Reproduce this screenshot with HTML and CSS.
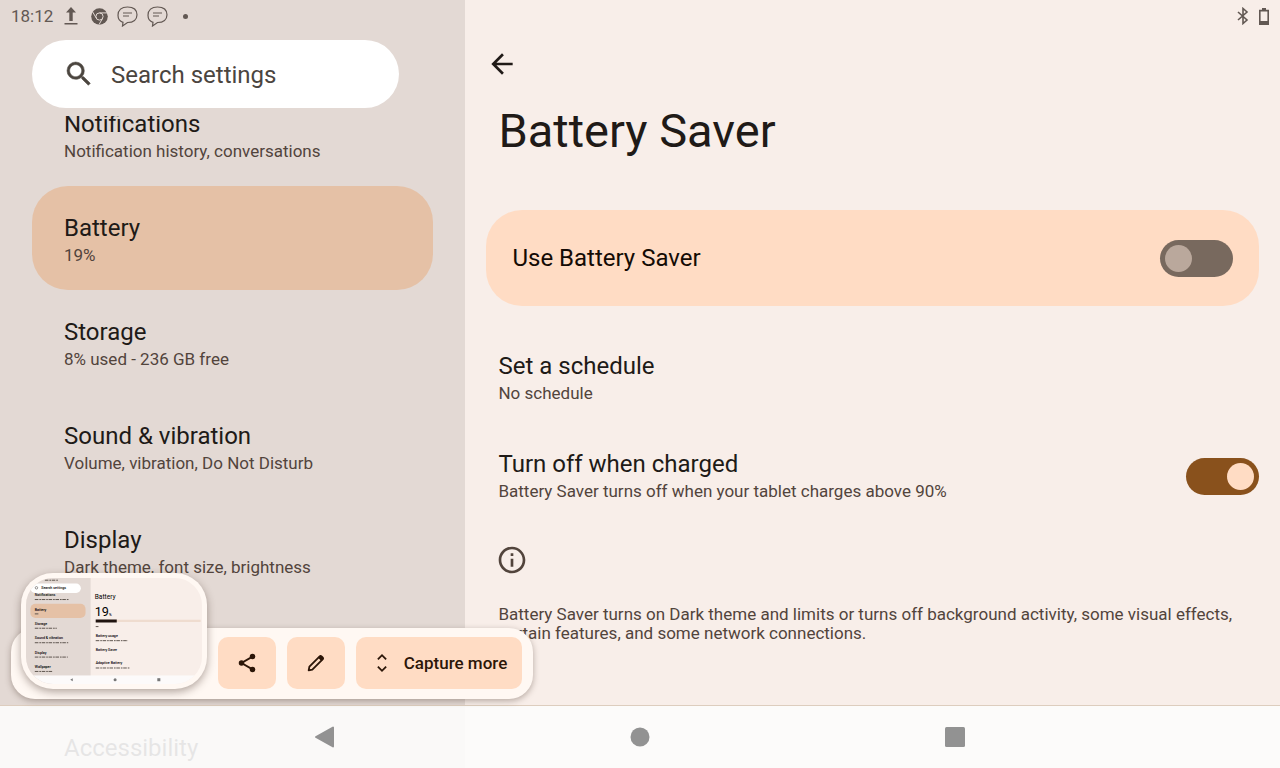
FILE: index.html
```html
<!DOCTYPE html>
<html lang="en">
<head>
    <meta charset="UTF-8">
    <meta name="viewport" content="width=device-width, initial-scale=1">
    <title>Battery Saver</title>
    <link rel="stylesheet" href="styles.css">
</head>
<body>
    <div class="status-bar">
        <span class="time">18:12</span>
        <svg class="st-upload" width="16" height="18" viewBox="0 0 16 18"><path d="M8 0l5 5.500H9.700V14H6.300V5.500H3zM1.500 16h13v1.600h-13z" fill="currentColor"/></svg>
        <svg class="st-chrome" width="17" height="17" viewBox="0 0 17 17">
            <circle cx="8.500" cy="8.500" r="8.300" fill="currentColor"/>
            <circle cx="8.500" cy="8.500" r="3.600" fill="none" stroke="#e3d9d4" stroke-width="1"/>
            <path d="M8.500 4.900h7.500M5.400 10.300L1.700 4M11.600 10.300L8 16.600" stroke="#e3d9d4" stroke-width="1"/>
        </svg>
        <svg class="st-chat" width="21" height="21" viewBox="0 0 21 21" fill="none" stroke="currentColor" stroke-width="1.200"><path d="M6 16.300C2.500 15.300 1 12.500 1 9.300 1 4 4.500 1 10.500 1S20 4 20 8.800s-3.500 7.700-9.500 7.700L5.500 20z"/><path d="M6 7h9M6 10h6"/></svg>
        <svg class="st-chat" width="21" height="21" viewBox="0 0 21 21" fill="none" stroke="currentColor" stroke-width="1.200"><path d="M6 16.300C2.500 15.300 1 12.500 1 9.300 1 4 4.500 1 10.500 1S20 4 20 8.800s-3.500 7.700-9.500 7.700L5.500 20z"/><path d="M6 7h9M6 10h6"/></svg>
        <span class="more-dot"></span>
        <svg class="st-bluetooth" width="12" height="18" viewBox="0 0 12 18" fill="none" stroke="currentColor" stroke-width="1.600"><path d="M1 5l9 8-4 3.500V1.500L10 5l-9 8"/></svg>
        <svg width="10" height="17" viewBox="0 0 10 17"><path d="M3 0h4v2H3z" fill="currentColor"/><path d="M.8 2.600h8.400v13.600H.8z" fill="none" stroke="currentColor" stroke-width="1.600"/><path d="M1 13h8v3.500H1z" fill="currentColor"/></svg>
    </div>

    <div class="settings">
        <aside class="sidebar">
            <label class="search">
                <svg width="32" height="32" viewBox="0 0 24 24"><path d="M15.500 14h-.79l-.28-.27A6.471 6.471 0 0 0 16 9.500 6.500 6.500 0 1 0 9.500 16c1.610 0 3.090-.59 4.230-1.570l.27.28v.79l5 4.990L20.490 19l-4.990-5zm-6 0C7.010 14 5 11.990 5 9.500S7.010 5 9.500 5 14 7.010 14 9.500 11.990 14 9.500 14z" fill="currentColor" stroke="currentColor" stroke-width=".4"/></svg>
                <input type="text" placeholder="Search settings" aria-label="Search settings">
            </label>
            <div class="menu-scroll">
                <ul class="menu">
                    <li><h2>Notifications</h2><p>Notification history, conversations</p></li>
                    <li class="active"><h2>Battery</h2><p>19%</p></li>
                    <li><h2>Storage</h2><p>8% used - 236 GB free</p></li>
                    <li><h2>Sound &amp; vibration</h2><p>Volume, vibration, Do Not Disturb</p></li>
                    <li><h2>Display</h2><p>Dark theme, font size, brightness</p></li>
                    <li></li>
                    <li><h2>Accessibility</h2></li>
                </ul>
            </div>
        </aside>

        <main class="detail">
            <button class="back" aria-label="Back">
                <svg width="32" height="32" viewBox="0 0 24 24"><path d="M20 11H7.830l5.590-5.590L12 4l-8 8 8 8 1.410-1.410L7.830 13H20z" fill="currentColor"/></svg>
            </button>
            <h1>Battery Saver</h1>
            <label class="main-switch">
                <span>Use Battery Saver</span>
                <input class="switch" type="checkbox">
            </label>
            <div class="row">
                <div><h2>Set a schedule</h2><p>No schedule</p></div>
            </div>
            <label class="row" for="turn-off">
                <div><h2>Turn off when charged</h2><p>Battery Saver turns off when your tablet charges above 90%</p></div>
                <input class="switch" id="turn-off" type="checkbox" checked>
            </label>
            <div class="footer">
                <svg width="32" height="32" viewBox="0 0 24 24"><path d="M11 7h2v2h-2zm0 4h2v6h-2zm1-9C6.480 2 2 6.480 2 12s4.480 10 10 10 10-4.480 10-10S17.520 2 12 2zm0 18c-4.410 0-8-3.590-8-8s3.590-8 8-8 8 3.590 8 8-3.590 8-8 8z" fill="currentColor"/></svg>
                <p>Battery Saver turns on Dark theme and limits or turns off background activity, some visual effects, certain features, and some network connections.</p>
            </div>
        </main>
    </div>

    <nav class="nav-bar">
        <button aria-label="Back"><svg width="22" height="22" viewBox="0 0 22 22"><path d="M19 1.500v19L2 11z" fill="currentColor" stroke="currentColor" stroke-width="2" stroke-linejoin="round"/></svg></button>
        <button aria-label="Home"><svg width="22" height="22" viewBox="0 0 22 22"><circle cx="11" cy="11" r="9.500" fill="currentColor"/></svg></button>
        <button aria-label="Recent apps"><svg width="22" height="22" viewBox="0 0 22 22"><rect x="1" y="1" width="20" height="20" rx="1.500" fill="currentColor"/></svg></button>
    </nav>

    <!-- screenshot toolbar floating over the settings -->
    <div class="capture">
        <button aria-label="Share"><svg width="22" height="22" viewBox="0 0 24 24"><path d="M18 5L6 12l12 7" fill="none" stroke="currentColor" stroke-width="2"/><circle cx="18" cy="5" r="3" fill="currentColor"/><circle cx="6" cy="12" r="3" fill="currentColor"/><circle cx="18" cy="19" r="3" fill="currentColor"/></svg></button>
        <button aria-label="Edit"><svg width="22" height="22" viewBox="0 0 24 24"><path d="M4 20l.8-4L16 4.800q1-1 2 0l1.200 1.200q1 1 0 2L8 19.200z" fill="none" stroke="currentColor" stroke-width="2" stroke-linejoin="round"/><path d="M14 6l3-2.500 3.500 3.500L18 10z" fill="currentColor"/></svg></button>
        <button class="more"><svg width="22" height="22" viewBox="0 0 24 24"><path d="M7.500 8L12 3.500 16.500 8M7.500 16l4.500 4.500 4.500-4.500" fill="none" stroke="currentColor" stroke-width="2"/></svg>Capture more</button>
    </div>
    <div class="preview">
        <svg viewBox="0 0 1280 768" preserveAspectRatio="none">
            <rect width="1280" height="768" fill="#f8eee9"/>
            <rect width="470" height="768" fill="#e3d9d4"/>
            <rect x="32" y="40" width="367" height="68" rx="34" fill="#fff"/>
            <rect x="32" y="186" width="401" height="104" rx="37" fill="#e5c1a6"/>
            <circle cx="76" cy="71" r="9" fill="none" stroke="#4b4540" stroke-width="4"/>
            <g class="mini-title">
                <text x="111" y="83">Search settings</text>
                <text x="64" y="131">Notifications</text>
                <text x="64" y="236">Battery</text>
                <text x="64" y="340">Storage</text>
                <text x="64" y="444">Sound &amp; vibration</text>
                <text x="64" y="549">Display</text>
                <text x="64" y="653">Wallpaper</text>
                <text x="507" y="428">Battery usage</text>
                <text x="507" y="528">Battery Saver</text>
                <text x="507" y="625">Adaptive Battery</text>
            </g>
            <g stroke="#5b514b" stroke-width="7" stroke-dasharray="26 7 12 5">
                <path d="M64 156h250M64 260h32M64 364h160M64 469h243M64 573h240M64 677h130M507 454h235M507 652h250M507 352h20M137 16h95"/>
            </g>
            <text class="mini-head" x="500" y="152">Battery</text>
            <text class="mini-level" x="500" y="278">19<tspan class="mini-title">%</tspan></text>
            <path d="M507 311h763" stroke="#efdccf" stroke-width="16"/>
            <path d="M507 311h153" stroke="#201410" stroke-width="22"/>
            <rect y="706" width="1280" height="62" fill="#fcfafa"/>
            <path d="M340 726v22l-18-11z" fill="#777"/>
            <circle cx="648" cy="737" r="11" fill="#777"/>
            <rect x="955" y="726" width="22" height="22" fill="#777"/>
        </svg>
    </div>
</body>
</html>
```
FILE: styles.css
```css
* {
    box-sizing: border-box;
}

body {
    margin: 0;
    height: 100vh;
    overflow: hidden;
    position: relative;
    background: #f8eee9;
    color: #201a17;
    font-family: Roboto, "Liberation Sans", sans-serif;
    font-size: 17px;
}

h1,
h2,
p,
ul {
    margin: 0;
    padding: 0;
    font-weight: 400;
}

li {
    list-style: none;
}

h2 {
    font-size: 24px;
    line-height: 30px;
}

p {
    color: #52443c;
    line-height: 25px;
}

button {
    border: 0;
    padding: 0;
    background: none;
    color: inherit;
    font-family: inherit;
    cursor: pointer;
}

svg {
    display: block;
    flex: none;
}

/* status bar */
.status-bar {
    position: absolute;
    top: 0;
    left: 0;
    right: 0;
    height: 32px;
    padding: 0 11px;
    display: flex;
    align-items: center;
    color: #625853;
}

.st-upload {
    margin-left: 10px;
}

.st-chrome {
    margin-left: 12px;
}

.st-chat {
    margin-left: 9px;
}

.more-dot {
    width: 5px;
    height: 5px;
    margin-left: 15px;
    border-radius: 50%;
    background: currentColor;
}

.st-bluetooth {
    margin-left: auto;
    margin-right: 10px;
}

/* two panes */
.settings {
    display: grid;
    grid-template-columns: minmax(0, 4fr) minmax(0, 7fr);
    height: 100%;
}

.sidebar {
    display: flex;
    flex-direction: column;
    min-height: 0;
    padding: 40px 32px 0;
    background: #e3d9d4;
}

.search {
    display: flex;
    align-items: center;
    gap: 16px;
    height: 68px;
    margin-right: 34px;
    padding: 0 31px;
    border-radius: 34px;
    background: #fff;
    color: #4b453f;
}

.search input {
    flex: 1;
    min-width: 0;
    padding: 2px 0 0;
    border: 0;
    outline: 0;
    background: none;
    color: inherit;
    font: inherit;
    font-size: 24px;
}

.search input::placeholder {
    color: inherit;
    opacity: 1;
}

.menu-scroll {
    flex: 1;
    min-height: 0;
    margin-top: 8px;
    overflow: hidden;
}

/* scrolled a little way down */
.menu {
    margin-top: -34px;
}

.menu li {
    height: 104px;
    padding: 27px 32px 0;
    border-radius: 36px;
}

.menu .active {
    background: #e5c1a6;
}

.detail {
    padding: 48px 21px 0;
}

.back {
    display: block;
}

.detail h1 {
    margin: 23px 12px 51px;
    font-size: 47px;
    line-height: 56px;
}

.main-switch {
    display: flex;
    align-items: center;
    justify-content: space-between;
    height: 96px;
    margin-bottom: 23px;
    padding: 0 26px;
    border-radius: 36px;
    background: #ffdcc4;
    color: #140b05;
    font-size: 24px;
}

.row {
    display: flex;
    align-items: center;
    justify-content: space-between;
    padding: 22px 0 21px 12px;
}

.switch {
    appearance: none;
    flex: none;
    width: 73px;
    height: 37px;
    margin: 0;
    padding: 5px;
    border-radius: 19px;
    background: #78695e;
}

.switch:before {
    content: '';
    display: block;
    width: 27px;
    height: 27px;
    border-radius: 50%;
    background: #baa89c;
}

.switch:checked {
    background: #89511c;
}

.switch:checked:before {
    margin-left: auto;
    background: #ffdcc4;
}

.footer {
    padding: 19px 10px 0;
    color: #52443c;
}

.footer p {
    margin: 29px -10px 0 2px;
    line-height: 19px;
}

/* system navigation */
.nav-bar {
    position: absolute;
    left: 0;
    right: 0;
    bottom: 0;
    height: 63px;
    display: flex;
    justify-content: center;
    border-top: 1px solid #ddcdbe;
    background: rgba(252, 252, 252, .9);
    background-clip: padding-box;
}

.nav-bar button {
    display: flex;
    align-items: center;
    justify-content: center;
    width: 315px;
    color: #929292;
}

/* screenshot toolbar */
.capture {
    position: absolute;
    left: 11px;
    bottom: 69px;
    display: flex;
    gap: 11px;
    padding: 9px 11px 10px 207px;
    border-radius: 24px;
    background: #fff8f3;
    box-shadow: 0 2px 6px rgba(60, 40, 30, .35);
}

.capture button {
    display: flex;
    align-items: center;
    justify-content: center;
    width: 58px;
    height: 52px;
    border-radius: 10px;
    background: #ffdcc4;
    color: #2c1608;
}

.capture .more {
    gap: 11px;
    width: 166px;
    font-size: 17px;
    font-weight: 500;
}

.preview {
    position: absolute;
    left: 21px;
    bottom: 79px;
    width: 186px;
    height: 116px;
    padding: 5px;
    border-radius: 32px;
    background: #fff8f3;
    box-shadow: 0 3px 8px rgba(60, 40, 30, .4);
}

.preview svg {
    width: 100%;
    height: 100%;
    border-radius: 27px;
}

.mini-title {
    font-size: 26px;
    font-weight: 500;
}

.mini-head {
    font-size: 48px;
}

.mini-level {
    font-size: 92px;
}
```
